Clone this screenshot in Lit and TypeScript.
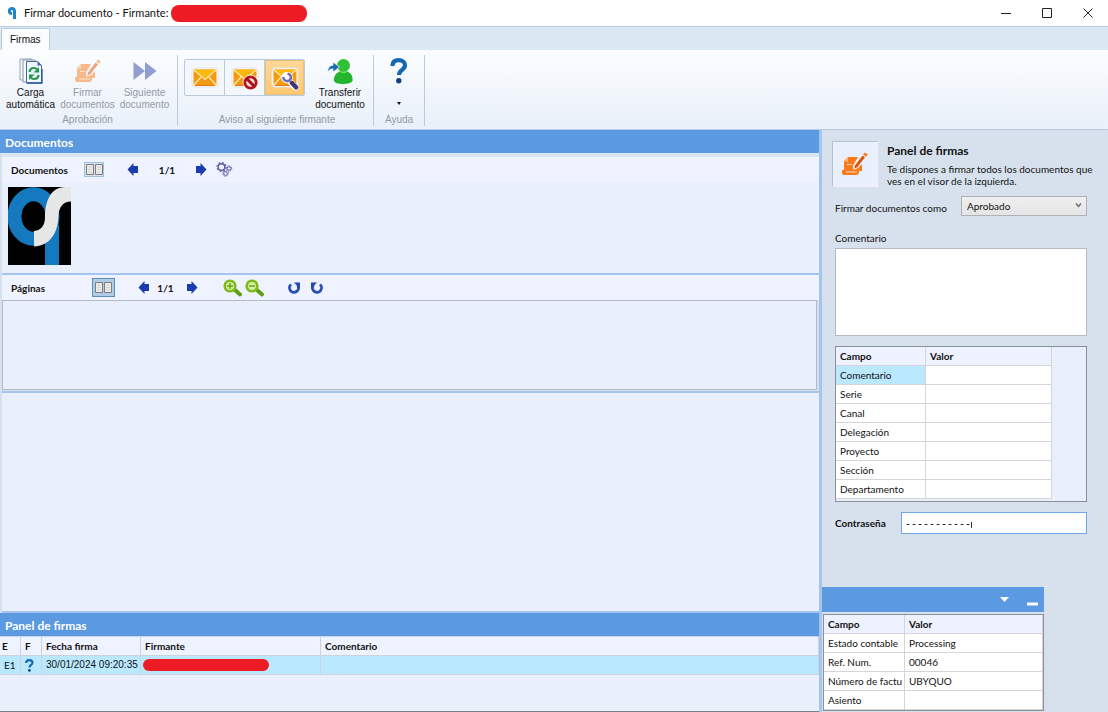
import { LitElement, html, css, svg, nothing } from "lit";
import { customElement, property, state } from "lit/decorators.js";

const logoIcon = html`<svg width="10" height="14" viewBox="0 0 10 14" aria-hidden="true">
  <path d="M7.500 13V5.200C7.500 3.200 6.400 2.500 4.800 2.500S2.300 3.500 2.300 5s1 2.600 2.800 2.600" fill="none" stroke="#1c86cc" stroke-width="3"/>
</svg>`;

const signShape = svg`
  <path d="M6 5h10l-5 8.500.5 4 4.500-1.500 4-4v7h-3v1q0 3-3 3H2q-2 0-2-2.500V18h2V9z" fill="#f97a1a"/>
  <path d="M6 5v4.500H1.800z" fill="#ffb577"/>
  <path d="M5 12.500h5M4 20h11" stroke="#fff" stroke-opacity=".7"/>
  <path d="M12.500 13.500 20.500 3l3 2.300-8 10.300-3.600 1.700z" fill="#d9540f" stroke="#fff" stroke-width=".8"/>
  <path d="M21 2.400 23 .4l2.800 2-1.700 2.400z" fill="#f47a2a"/>
`;
const signIcon = html`<svg width="26" height="24" viewBox="0 0 26 24" aria-hidden="true">${signShape}</svg>`;

const reloadIcon = html`<svg width="24" height="26" viewBox="0 0 24 26" aria-hidden="true">
  <path d="M1 1h12v21H1z" fill="#f5f7fa" stroke="#93a5b8"/>
  <path d="M4 2h12v22H4z" fill="#f8fafc" stroke="#8296ab"/>
  <path d="M7.500 3.500h11l4 4v17.500h-15z" fill="#eef6ff" stroke="#46688f"/>
  <path d="M18.500 3v4.500h4.500z" fill="#3d68ad"/>
  <path d="M8 25h15V11" fill="none" stroke="#2b55a0" stroke-width="1.300"/>
  <path d="M10.500 14q.5-4 4.500-4 2 0 3 1.300" fill="none" stroke="#27964a" stroke-width="2.200"/>
  <path d="M20 9v5.500h-5.500z" fill="#27964a"/>
  <path d="M19.700 17q-.7 4-4.700 4-2 0-3-1.300" fill="none" stroke="#27964a" stroke-width="2.200"/>
  <path d="M10 22v-5.500h5.500z" fill="#27964a"/>
</svg>`;

const nextIcon = html`<svg width="26" height="22" viewBox="0 0 26 22" aria-hidden="true">
  <path d="M1.500 2 13 11 1.500 20zM13 2l11.500 9L13 20z" fill="#2f45a8"/>
</svg>`;

const envelope = svg`
  <rect x="1" y="3" width="26" height="19" rx="3" fill="#fff" stroke="#dfe4ea"/>
  <rect x="2.500" y="4.500" width="23" height="16" rx="1.500" fill="#f49a12"/>
  <path d="M2.500 4.500h23L14 14z" fill="#fbb80d"/>
  <path d="M4 20.500h20" stroke="#e57812"/>
  <path d="M3 5l11 9.500L25 5M3 20l7.500-8.500M25 20l-7.500-8.500" fill="none" stroke="#ffe9ae" stroke-width="1.200"/>
`;
const mailIcon = html`<svg width="28" height="26" viewBox="0 0 28 26" aria-hidden="true">${envelope}</svg>`;
const mailOffIcon = html`<svg width="28" height="26" viewBox="0 0 28 26" aria-hidden="true">${envelope}
  <circle cx="19.500" cy="17.500" r="7.800" fill="#fff"/>
  <circle cx="19.500" cy="17.500" r="5.700" fill="#f3dada" stroke="#b3151d" stroke-width="2.800"/>
  <path d="m15.500 13.500 8 8" stroke="#a51018" stroke-width="3"/>
</svg>`;
const mailToolIcon = html`<svg width="28" height="26" viewBox="0 0 28 26" aria-hidden="true">${envelope}
  <path d="m18.500 16 6 6.500" stroke="#fff" stroke-width="6" stroke-linecap="round"/>
  <circle cx="16" cy="12.500" r="5.800" fill="#fff"/>
  <path d="M16.500 8.700a3.700 3.700 0 1 1-4 3.300" fill="none" stroke="#706eb3" stroke-width="2.600"/>
  <path d="m19 16 2 2" stroke="#8a87c2" stroke-width="2.600"/>
  <path d="m21 18 4 4.300" stroke="#3b3779" stroke-width="4.400" stroke-linecap="round"/>
</svg>`;

const transferIcon = html`<svg width="28" height="27" viewBox="0 0 28 27" aria-hidden="true">
  <circle cx="17.500" cy="7.500" r="6.500" fill="#2fc235"/>
  <path d="M8 23c-.5-5 2-8 5.500-9.500h8C25 15 27 18 26.500 23q-1.500 3-9.500 3t-9-3z" fill="#25b52c"/>
  <path d="M13.500 13q4 3 8 0" fill="none" stroke="#68dd63" stroke-width="1.300"/>
  <path d="M1.500 14Q2 7.500 7 7.200V4l6.500 5L7 14.200v-3.400Q4 10.600 1.500 14z" fill="#176bb0" stroke="#fff" stroke-width=".7"/>
</svg>`;

const helpShape = svg`
  <path d="M2.300 8C2.500 4 5 2.200 8.500 2.200S15 4 15 7.300c0 4.700-6 4.500-6 9.700" fill="none" stroke="#1467b3" stroke-width="4.200"/>
  <circle cx="8.800" cy="22.800" r="2.700" fill="#173c80"/>
`;
const helpIcon = html`<svg width="18" height="26" viewBox="0 0 18 26" aria-hidden="true">${helpShape}</svg>`;
const helpSmallIcon = html`<svg width="9" height="13" viewBox="0 0 18 26" role="img" aria-label="Pendiente">${helpShape}</svg>`;

const pagesIcon = html`<svg width="17" height="11" viewBox="0 0 17 11" aria-hidden="true">
  <path d="M.5.5h7v10h-7zM9.500.5h7v10h-7z" fill="#eceae6" stroke="#7d7d7d"/>
  <path d="M2 3h4M2 5.500h4M2 8h4M11 3h4M11 5.500h4M11 8h4" stroke="#d4d4d4"/>
</svg>`;

const leftIcon = html`<svg width="12" height="15" viewBox="0 0 12 15" aria-hidden="true">
  <path d="M.5 7.500 6.500 1v3H11v7H6.500v3z" fill="#1b3cae"/></svg>`;
const rightIcon = html`<svg width="12" height="15" viewBox="0 0 12 15" aria-hidden="true">
  <path d="M11.500 7.500 5.500 1v3H1v7h4.500v3z" fill="#1b3cae"/></svg>`;

const gearsIcon = html`<svg width="17" height="15" viewBox="0 0 17 15" fill="none" stroke="#5b5aa0" aria-hidden="true">
  <circle cx="5.500" cy="5" r="3.300" stroke-width="1.400"/>
  <circle cx="5.500" cy="5" r="4.500" stroke-width="1.200" stroke-dasharray="1.700 1.830"/>
  <circle cx="13" cy="6.500" r="1.800"/><circle cx="13" cy="6.500" r="2.800" stroke-dasharray="1.100 1.100"/>
  <circle cx="9.500" cy="11.500" r="1.800"/><circle cx="9.500" cy="11.500" r="2.800" stroke-dasharray="1.100 1.100"/>
</svg>`;

const zoomIcon = (plus: boolean) => html`<svg width="19" height="18" viewBox="0 0 19 18" aria-hidden="true">
  <path d="m11.500 10.500 5.500 5" stroke="#5c9e14" stroke-width="3.800" stroke-linecap="round"/>
  <circle cx="7" cy="7" r="5.300" fill="#d5efa2" stroke="#7dbb1b" stroke-width="2.600"/>
  <path d="M4 7h6" stroke="#69a812" stroke-width="1.500"/>
  ${plus ? svg`<path d="M7 4v6" stroke="#69a812" stroke-width="1.500"/>` : nothing}
</svg>`;

const rotateRight = svg`
  <path d="M4 3.500a4.500 4.500 0 1 0 6.800 1" fill="none" stroke="#2b4fb3" stroke-width="2.900"/>
  <path d="M7 1.500h6V8z" fill="#2846ac"/>
`;
const rotateIcon = (back: boolean) => html`<svg width="14" height="14" viewBox="0 0 14 14" aria-hidden="true">
  ${back ? svg`<g transform="matrix(-1 0 0 1 14 0)">${rotateRight}</g>` : rotateRight}
</svg>`;

const thumbnail = html`<svg width="63" height="78" viewBox="0 0 63 78" role="img" aria-label="Documento 1">
  <path d="M0 0h63v78H0z" fill="#000"/>
  <path d="M37 38h14v40H37z" fill="#1479bf"/>
  <ellipse cx="25.500" cy="29.500" rx="19" ry="22.200" fill="none" stroke="#1479bf" stroke-width="14"/>
  <path d="M26 44Q37 43 37 30C37 14 43 0 57 0h6v14.500Q51 15 50.500 29C50 47 41 59 26 59.500z" fill="#e6e6e6"/>
</svg>`;

const shared = css`
  :host { box-sizing: border-box; }
  *, *::before, *::after { box-sizing: inherit; }
  button, input, select, textarea { font: inherit; color: inherit; margin: 0; }
  button { border: 0; padding: 0; background: none; }
  svg { display: block; flex: none; }
`;

interface Field { name: string; value: string; }

@customElement("field-table")
class FieldTable extends LitElement {
  @property({ attribute: false }) rows: Field[] = [];
  @property({ type: Number }) nameWidth = 90;
  @property({ type: Number }) spare = 0;
  @property({ type: Number }) selected = -1;

  static styles = [shared, css`
    :host { display: block; background: #e9f0fb; border: 1px solid #8b8f96; }
    .grid { width: 100%; border-collapse: separate; border-spacing: 0; table-layout: fixed; }
    th, td {
      height: 19px; padding: 0 0 0 4px; text-align: left; line-height: 16px; background: #fff;
      border-right: 1px solid #d3d5da; border-bottom: 1px solid #d3d5da;
      white-space: nowrap; overflow: hidden;
    }
    th { background: #eef2ff; font-weight: 700; }
    .on { background: #bae9ff; }
  `];

  render() {
    return html`<div style="padding-right:${this.spare}px">
      <table class="grid">
        <colgroup><col style="width:${this.nameWidth}px"><col></colgroup>
        <thead><tr><th scope="col">Campo</th><th scope="col">Valor</th></tr></thead>
        <tbody>${this.rows.map((r, i) => html`<tr>
          <td class=${i === this.selected ? "on" : ""}>${r.name}</td><td>${r.value}</td>
        </tr>`)}</tbody>
      </table>
    </div>`;
  }
}

@customElement("app-root")
class AppRoot extends LitElement {
  @state() private mailMode = 2;

  private fields: Field[] = ["Comentario", "Serie", "Canal", "Delegación", "Proyecto", "Sección", "Departamento"]
    .map((name) => ({ name, value: "" }));

  private status: Field[] = [
    { name: "Estado contable", value: "Processing" },
    { name: "Ref. Num.", value: "00046" },
    { name: "Número de factu", value: "UBYQUO" },
    { name: "Asiento", value: "" },
  ];

  static styles = [shared, css`
    :host {
      display: flex; flex-direction: column; height: 100vh; overflow: hidden;
      font: 10px/12px Lato, "Open Sans", sans-serif; color: #111; background: #d7e1ee;
    }
    .title { display: flex; align-items: center; height: 26px; padding-left: 7px; background: #fff; flex: none; }
    .title h1 { margin: 0 3px 0 7px; font-size: 11px; font-weight: 400; line-height: 16px; }
    .mask { display: block; background: #ed1c24; border-radius: 8px; }
    .mask-title { width: 136px; height: 17px; }
    .mask-cell { width: 126px; height: 12px; }
    .window { display: flex; margin-left: auto; }
    .window button { display: grid; place-items: center; width: 41px; height: 24px; }
    .tabs { display: flex; align-items: flex-end; height: 24px; padding-left: 1px; background: #dce7f4; border-top: 1px solid #b9cbe0; flex: none; }
    .tab {
      height: 22px; padding: 0 8px; background: #fafcfe; border: 1px solid #b9cbe0; border-bottom: 0;
      border-radius: 2px 2px 0 0; font: 10px/12px "Liberation Sans", sans-serif;
    }
    .ribbon {
      display: flex; height: 80px; padding: 5px 0 3px; flex: none; border-bottom: 1px solid #b9cbe0;
      background: linear-gradient(#fbfdff, #e9f0f9);
      font: 10px/12px "Liberation Sans", sans-serif;
    }
    .group { display: flex; flex-direction: column; justify-content: space-between; padding: 0 4px 0 2px; border-right: 1px solid #b9cbe0; }
    .group-mail { padding: 0 3px 0 6px; }
    .group-help { padding: 0; width: 51px; }
    .tools { display: flex; align-items: flex-start; }
    .caption { text-align: center; color: #939aa3; }
    .tool { display: flex; flex-direction: column; align-items: center; width: 57px; height: 56px; white-space: pre-line; text-align: center; }
    .tool-icon { display: grid; place-items: center; height: 32px; }
    .tool:disabled { color: #959ba4; }
    .tool:disabled .tool-icon { opacity: .5; }
    .tool-wide { width: 60px; margin-left: 5px; }
    .tool-help { width: 50px; }
    .more { margin-top: 15px; border: 2px solid transparent; border-top: 3px solid #111; border-bottom: 0; }
    .modes { display: flex; margin-top: 4px; border: 1px solid #b9cbe0; background: #f4f8fd; border-radius: 2px; }
    .mode { display: grid; place-items: center; width: 39px; height: 35px; }
    .mode + .mode { width: 40px; border-left: 1px solid #b9cbe0; }
    .mode-on { background: linear-gradient(#ffd798, #ffc870); box-shadow: inset 0 0 0 1px #e9bf80; }

    .main { display: flex; flex: 1; min-height: 0; }
    .work { display: flex; flex-direction: column; flex: 1; min-width: 0; }
    .bar { display: flex; align-items: center; height: 23px; padding: 2px 0 0 5px; margin: 0; background: #5b99e0; color: #fff; font-size: 12px; font-weight: 700; flex: none; }
    .docs { border-top: 4px solid #dce6f2; height: 120px; background: #e9f0fb; margin-left: 2px; flex: none; }
    .strip { display: flex; align-items: center; height: 25px; background: #eff3ff; padding-left: 9px; font-weight: 700; }
    .strip button { display: grid; place-items: center; }
    .name { width: 73px; }
    .name-pages { width: 81px; }
    .view { width: 20px; height: 15px; background: #d4e3f5; border: 1px solid #a3bedb; }
    .view-on { width: 23px; height: 19px; background: #aecbe8; border: 1px solid #5d8db8; }
    .prev { margin-left: 23px; }
    .count { width: 56px; text-align: center; }
    .count-pages { width: 36px; padding-right: 5px; text-align: center; }
    .gears { margin-left: 9px; }
    .zoom { margin-left: 25px; }
    .zoom-out { margin-left: 3px; }
    .back { margin-left: 23px; }
    .forward { margin-left: 9px; }
    .thumb { display: block; margin: 5px 0 0 6px; }
    .pages { margin-left: 2px; border-top: 2px solid #a5c5ee; border-bottom: 2px solid #a5c5ee; flex: none; }
    .sheet { height: 90px; margin: 0 2px 1px 0; background: #e9f0fb; border: 1px solid #b2bbc6; }
    .viewer { flex: 1; margin-left: 2px; background: #e9f0fb; border-bottom: 2px solid #a5c5ee; }
    .signers { background: #e9f0fb; border-top: 1px solid #cbd3de; border-bottom: 1px solid #7c8087; height: 76px; flex: none; }
    .sign-table { width: 100%; border-collapse: separate; border-spacing: 0; table-layout: fixed; }
    .sign-table th, .sign-table td { height: 19px; padding: 0 4px; text-align: left; white-space: nowrap; border-right: 1px solid #cbd3de; border-bottom: 1px solid #cbd3de; }
    .sign-table th { background: #eff3ff; }
    .sign-table td { background: #bae9ff; }
    .sign-table .tight { padding: 0 2px; }
    .sign-table .date { font-family: "Liberation Sans", sans-serif; }
    .c-e { width: 21px; } .c-f { width: 21px; } .c-date { width: 99px; } .c-who { width: 180px; }

    .side { display: flex; flex-direction: column; justify-content: space-between; width: 289px; border-left: 3px solid #a5c5ee; flex: none; }
    .form { display: flex; flex-direction: column; padding: 11px 21px 0 13px; }
    .intro { display: flex; gap: 9px; margin: 0 -12px 0 -3px; }
    .badge { display: grid; place-items: center; width: 46px; height: 46px; background: #e9f0fb; border: 1px solid #b8c3d2; border-right-color: #eef3fa; border-bottom-color: #eef3fa; flex: none; }
    .intro h2 { margin: 2px 0 4px; font-size: 12px; line-height: 16px; }
    .intro p { margin: 0; }
    .row { display: flex; align-items: center; justify-content: space-between; }
    .as { margin-top: 9px; }
    .as label { padding-top: 4px; }
    .select { position: relative; width: 126px; height: 20px; }
    .select select { appearance: none; width: 100%; height: 100%; padding: 0 5px; border: 1px solid #adb2b9; border-radius: 0; background: linear-gradient(#f0f0f0, #e4e4e4); }
    .chevron { position: absolute; right: 5px; top: 7px; pointer-events: none; }
    .label { margin: 16px 0 4px; }
    .note { display: block; width: 100%; height: 88px; resize: none; background: #fff; border: 1px solid #b3b9c1; border-radius: 0; }
    .fields { margin-top: 10px; padding-bottom: 2px; }
    .pass { margin-top: 10px; font-weight: 700; }
    .secret { display: flex; align-items: center; width: 186px; height: 22px; padding: 4px 3px 0; background: #fff; border: 1px solid #6fa8ea; }
    .secret input { width: 66px; border: 0; padding: 0; outline: 0; background: none; font: 10px/12px "Liberation Mono", monospace; }
    .caret { width: 1px; height: 6px; background: #333; }
    .dock { width: 222px; }
    .dock-bar { display: flex; justify-content: flex-end; align-items: center; gap: 18px; height: 25px; padding-right: 6px; margin-bottom: 2px; background: #5b99e0; }
    .dock-bar button { height: 12px; display: flex; align-items: center; }
    .status { margin: 0 0 1px 1px; }
  `];

  private modes = [
    { label: "Avisar por correo", icon: mailIcon },
    { label: "No avisar", icon: mailOffIcon },
    { label: "Aviso configurado", icon: mailToolIcon },
  ];

  render() {
    return html`
      <header class="title">
        ${logoIcon}<h1>Firmar documento - Firmante:</h1><span class="mask mask-title"></span>
        <div class="window">
          <button aria-label="Minimizar"><svg width="10" height="10"><path d="M0 5.500h10" stroke="#222"/></svg></button>
          <button aria-label="Maximizar"><svg width="10" height="10"><path d="M.5.5h9v9h-9z" fill="none" stroke="#222"/></svg></button>
          <button aria-label="Cerrar"><svg width="10" height="10"><path d="m.5.5 9 9m0-9-9 9" stroke="#222"/></svg></button>
        </div>
      </header>
      <nav class="tabs"><button class="tab">Firmas</button></nav>
      <section class="ribbon">
        <div class="group">
          <div class="tools">
            <button class="tool"><span class="tool-icon">${reloadIcon}</span>${"Carga\nautomática"}</button>
            <button class="tool" disabled><span class="tool-icon">${signIcon}</span>${"Firmar\ndocumentos"}</button>
            <button class="tool" disabled><span class="tool-icon">${nextIcon}</span>${"Siguiente\ndocumento"}</button>
          </div>
          <div class="caption">Aprobación</div>
        </div>
        <div class="group group-mail">
          <div class="tools">
            <div class="modes">${this.modes.map((m, i) => html`
              <button class="mode ${i === this.mailMode ? "mode-on" : ""}" aria-label=${m.label}
                aria-pressed=${i === this.mailMode ? "true" : "false"} @click=${() => (this.mailMode = i)}>${m.icon}</button>`)}
            </div>
            <button class="tool tool-wide"><span class="tool-icon">${transferIcon}</span>${"Transferir\ndocumento"}</button>
          </div>
          <div class="caption">Aviso al siguiente firmante</div>
        </div>
        <div class="group group-help">
          <button class="tool tool-help" aria-label="Ayuda"><span class="tool-icon">${helpIcon}</span><span class="more"></span></button>
          <div class="caption">Ayuda</div>
        </div>
      </section>

      <main class="main">
        <div class="work">
          <h2 class="bar">Documentos</h2>
          <section class="docs">
            <div class="strip">
              <span class="name">Documentos</span>
              <button class="view" aria-label="Vista">${pagesIcon}</button>
              <button class="prev" aria-label="Documento anterior">${leftIcon}</button>
              <span class="count">1/1</span>
              <button aria-label="Documento siguiente">${rightIcon}</button>
              <button class="gears" aria-label="Opciones">${gearsIcon}</button>
            </div>
            <button class="thumb">${thumbnail}</button>
          </section>
          <section class="pages">
            <div class="strip">
              <span class="name-pages">Páginas</span>
              <button class="view-on" aria-label="Vista">${pagesIcon}</button>
              <button class="prev" aria-label="Página anterior">${leftIcon}</button>
              <span class="count-pages">1/1</span>
              <button aria-label="Página siguiente">${rightIcon}</button>
              <button class="zoom" aria-label="Acercar">${zoomIcon(true)}</button>
              <button class="zoom-out" aria-label="Alejar">${zoomIcon(false)}</button>
              <button class="back" aria-label="Girar a la derecha">${rotateIcon(false)}</button>
              <button class="forward" aria-label="Girar a la izquierda">${rotateIcon(true)}</button>
            </div>
            <div class="sheet"></div>
          </section>
          <section class="viewer"></section>
          <h2 class="bar">Panel de firmas</h2>
          <section class="signers">
            <table class="sign-table">
              <colgroup><col class="c-e"><col class="c-f"><col class="c-date"><col class="c-who"><col></colgroup>
              <thead><tr><th class="tight" scope="col">E</th><th scope="col">F</th><th scope="col">Fecha firma</th><th scope="col">Firmante</th><th scope="col">Comentario</th></tr></thead>
              <tbody><tr><td>E1</td><td>${helpSmallIcon}</td><td class="date">30/01/2024 09:20:35</td><td class="tight"><span class="mask mask-cell"></span></td><td></td></tr></tbody>
            </table>
          </section>
        </div>

        <aside class="side">
          <form class="form" @submit=${(e: Event) => e.preventDefault()}>
            <div class="intro">
              <div class="badge">${signIcon}</div>
              <div><h2>Panel de firmas</h2><p>Te dispones a firmar todos los documentos que ves en el visor de la izquierda.</p></div>
            </div>
            <div class="row as">
              <label for="as">Firmar documentos como</label>
              <div class="select">
                <select id="as"><option>Aprobado</option></select>
                <svg class="chevron" width="7" height="5" aria-hidden="true"><path d="m1 .5 2.500 3L6 .5" fill="none" stroke="#666" stroke-width="1.300"/></svg>
              </div>
            </div>
            <label class="label" for="note">Comentario</label>
            <textarea class="note" id="note"></textarea>
            <field-table class="fields" .rows=${this.fields} .nameWidth=${90} .spare=${34} .selected=${0}></field-table>
            <div class="row pass">
              <label for="pass">Contraseña</label>
              <div class="secret"><input id="pass" autocomplete="off" value="-----------"><span class="caret"></span></div>
            </div>
          </form>
          <section class="dock">
            <div class="dock-bar">
              <button aria-label="Menú"><svg width="9" height="5"><path d="M0 0h9L4.500 5z" fill="#fff"/></svg></button>
              <button aria-label="Ocultar"><svg width="11" height="12"><path d="M0 10h11" stroke="#fff" stroke-width="3"/></svg></button>
            </div>
            <field-table class="status" .rows=${this.status} .nameWidth=${81}></field-table>
          </section>
        </aside>
      </main>
    `;
  }
}
